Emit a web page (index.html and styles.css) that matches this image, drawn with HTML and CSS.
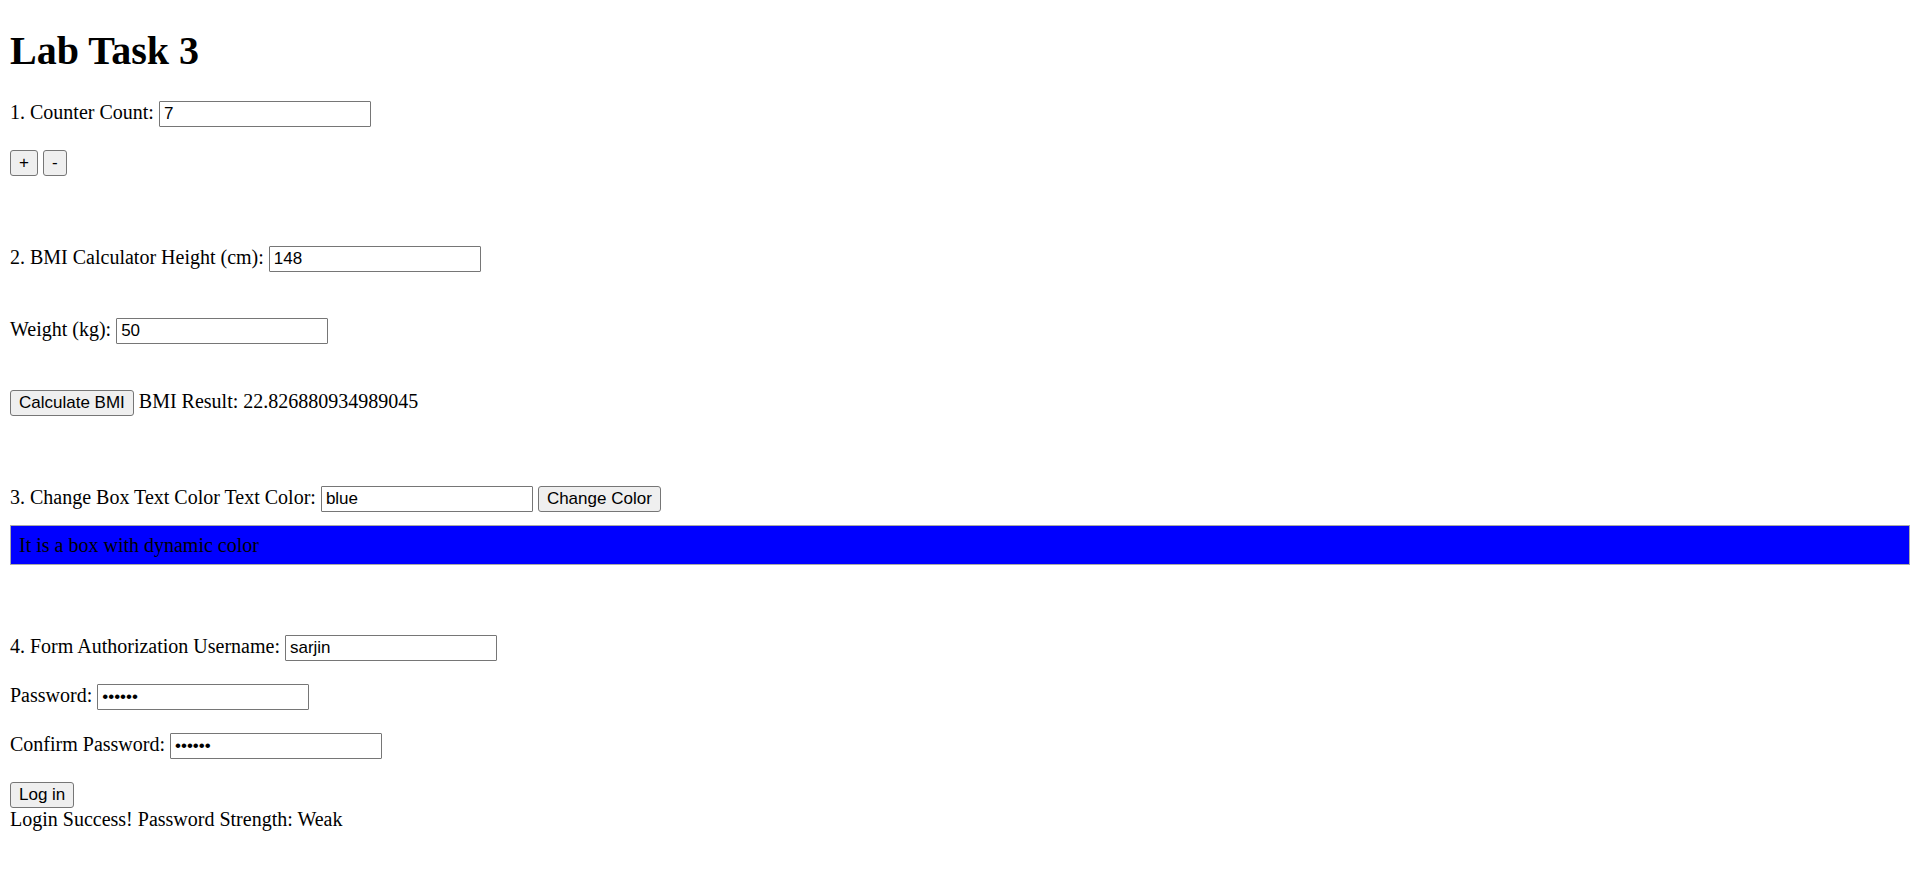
FILE: index.html
```html
<!DOCTYPE html>
<html lang="en">
<head>
<meta charset="utf-8">
<title>Lab Task 3</title>
<link rel="stylesheet" href="styles.css">
</head>
<body>
<main class="page">
  <h1 class="title">Lab Task 3</h1>

  <section class="section">
    <div class="row">
      <label for="count">1. Counter Count:</label>
      <input class="field" id="count" type="text" value="7">
    </div>
    <div class="row">
      <button class="btn" type="button">+</button>
      <button class="btn" type="button">-</button>
    </div>
  </section>

  <section class="section section-loose">
    <div class="row">
      <label for="height">2. BMI Calculator Height (cm):</label>
      <input class="field" id="height" type="text" value="148">
    </div>
    <div class="row">
      <label for="weight">Weight (kg):</label>
      <input class="field" id="weight" type="text" value="50">
    </div>
    <div class="row">
      <button class="btn" type="button">Calculate BMI</button>
      <span>BMI Result: 22.826880934989045</span>
    </div>
  </section>

  <section class="section section-box">
    <div class="row">
      <label for="color">3. Change Box Text Color Text Color:</label>
      <input class="field" id="color" type="text" value="blue">
      <button class="btn" type="button">Change Color</button>
    </div>
    <div class="color-box">It is a box with dynamic color</div>
  </section>

  <form class="section">
    <div class="row">
      <label for="username">4. Form Authorization Username:</label>
      <input class="field" id="username" type="text" value="sarjin" autocomplete="username">
    </div>
    <div class="row">
      <label for="password">Password:</label>
      <input class="field" id="password" type="password" value="123456" autocomplete="new-password">
    </div>
    <div class="row">
      <label for="confirm">Confirm Password:</label>
      <input class="field" id="confirm" type="password" value="123456" autocomplete="new-password">
    </div>
    <div>
      <div class="row">
        <button class="btn" type="button">Log in</button>
      </div>
      <div>Login Success! Password Strength: Weak</div>
    </div>
  </form>
</main>
</body>
</html>
```

FILE: styles.css
```css
body {
  margin: 0 9px 0 10px;
  background: #fff;
  color: #000;
  font-family: "Liberation Serif", "Times New Roman", serif;
  font-size: 20px;
  line-height: 23px;
}

.page {
  display: flex;
  flex-direction: column;
  gap: 70px;
  padding-top: 28px;
}

.title {
  margin: 0 0 -43px;
  font-size: 40px;
  line-height: 46px;
}

.section {
  display: flex;
  flex-direction: column;
  gap: 23px;
}

.section-loose {
  gap: 46px;
}

.section-box {
  gap: 13px;
}

.row {
  display: flex;
  flex-wrap: wrap;
  align-items: baseline;
  column-gap: 5px;
}

.field,
.btn {
  box-sizing: border-box;
  height: 26px;
  margin: 0;
  border: 1px solid #767676;
  color: #000;
  font-family: "Liberation Sans", Arial, sans-serif;
  font-size: 17px;
}

.field {
  width: 212px;
  padding: 1px 4px;
  border-radius: 1px;
  background: #fff;
}

.btn {
  padding: 1px 8px;
  border-radius: 3px;
  background: #efefef;
}

.color-box {
  padding: 8px 8px 7px;
  border: 1px solid #a9a9a9;
  background: #00f;
}
```
